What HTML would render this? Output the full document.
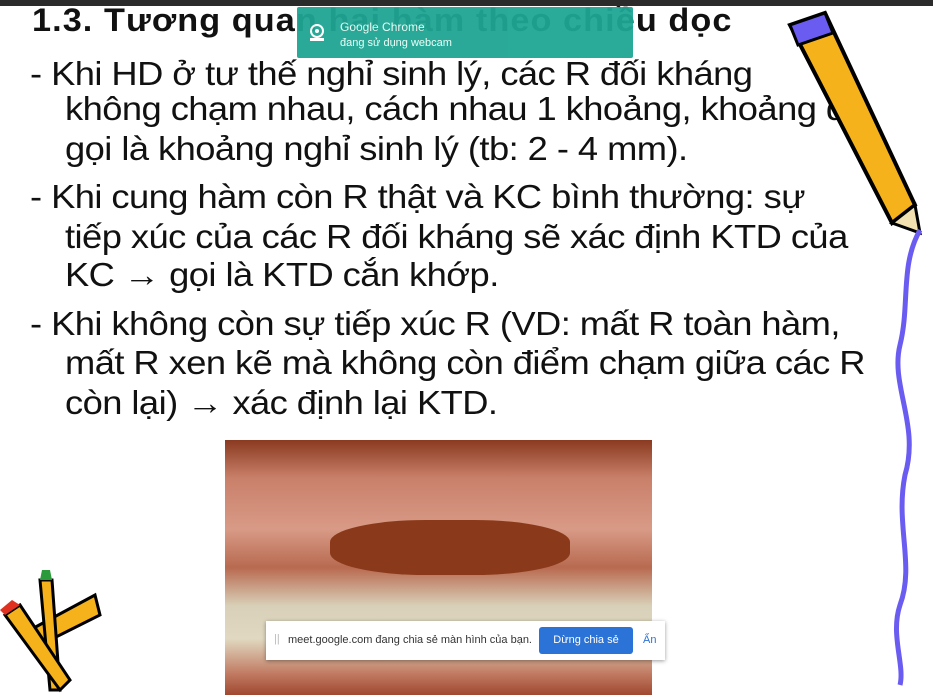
<!DOCTYPE html>
<html><head><meta charset="utf-8"><style>
body{margin:0;width:933px;height:695px;background:#fff;position:relative;overflow:hidden;font-family:"Liberation Sans","DejaVu Sans",sans-serif}
.topbar{position:absolute;left:0;top:0;width:933px;height:6px;background:#2b2b2b}
.l{position:absolute;white-space:nowrap;font-size:33px;color:#111;letter-spacing:-0.5px;transform-origin:left center;transform:scaleX(1.1)}
.pop{position:absolute;left:297px;top:7px;width:336px;height:51px;background:#1fa593;opacity:.95;color:#e8fff9;font-size:12px;border-radius:2px}
.bar{position:absolute;left:266px;top:621px;width:399px;height:39px;background:#fff;box-shadow:0 1px 4px rgba(0,0,0,.4);font-size:11px;color:#333}
</style></head><body>
<div class="topbar"></div>
<div class="l" style="left:32px;top:2px;font-size:32px;font-weight:bold;letter-spacing:1px;transform:scaleX(1.07)">1.3. Tương quan hai hàm theo chiều dọc</div>
<div class="l" style="left:30px;top:55px">- Khi HD ở tư thế nghỉ sinh lý, các R đối kháng</div>
<div class="l" style="left:65px;top:90px;transform:scaleX(1.1)">không chạm nhau, cách nhau 1 khoảng, khoảng đó</div>
<div class="l" style="left:65px;top:130px">gọi là khoảng nghỉ sinh lý (tb: 2 - 4 mm).</div>
<div class="l" style="left:30px;top:178px">- Khi cung hàm còn R thật và KC bình thường: sự</div>
<div class="l" style="left:65px;top:218px">tiếp xúc của các R đối kháng sẽ xác định KTD của</div>
<div class="l" style="left:65px;top:256px">KC → gọi là KTD cắn khớp.</div>
<div class="l" style="left:30px;top:305px">- Khi không còn sự tiếp xúc R (VD: mất R toàn hàm,</div>
<div class="l" style="left:65px;top:344px">mất R xen kẽ mà không còn điểm chạm giữa các R</div>
<div class="l" style="left:65px;top:384px">còn lại) → xác định lại KTD.</div>
<svg style="position:absolute;left:780px;top:5px" width="153" height="690">
<polygon points="10,20 45,8 135,200 112,218" fill="#f5b21b" stroke="#000" stroke-width="4"/>
<polygon points="10,20 45,8 53,28 18,40" fill="#6a5cf0" stroke="#000" stroke-width="3"/>
<polygon points="112,218 135,200 140,228" fill="#f2e0b0" stroke="#000" stroke-width="3"/>
<path d="M140,225 C120,260 130,300 120,340 C110,380 140,420 125,470 C115,520 135,560 120,600 C110,630 125,660 120,680" stroke="#6a5cf0" stroke-width="5" fill="none"/>
</svg>
<svg style="position:absolute;left:0;top:570px" width="110" height="125">
<polygon points="30,60 95,25 100,45 40,75" fill="#f5b21b" stroke="#000" stroke-width="3"/>
<polygon points="40,10 52,10 60,120 50,120" fill="#f5b21b" stroke="#000" stroke-width="3"/>
<polygon points="40,10 52,10 50,0 42,0" fill="#2a9a3a"/>
<polygon points="5,45 20,35 70,110 60,120" fill="#f5b21b" stroke="#000" stroke-width="3"/>
<polygon points="5,45 20,35 12,30 0,40" fill="#e03020"/>
</svg>
<div style="position:absolute;left:225px;top:440px;width:427px;height:255px;background:linear-gradient(180deg,#8a3a20 0%,#c9806a 15%,#d89a86 35%,#b86a50 50%,#d8d0b8 65%,#e0d8c0 78%,#c07860 92%,#a04830 100%)"></div>
<div style="position:absolute;left:330px;top:520px;width:240px;height:55px;background:#8a3a1a;border-radius:40%"></div>
<div class="pop"><svg style="position:absolute;left:10px;top:16px" width="20" height="20"><circle cx="10" cy="8" r="6" fill="none" stroke="#fff" stroke-width="2"/><circle cx="10" cy="8" r="2" fill="#fff"/><rect x="3" y="15" width="14" height="3" fill="#fff"/></svg><div style="position:absolute;left:43px;top:13px">Google Chrome</div><div style="position:absolute;left:43px;top:30px;font-size:11px">đang sử dụng webcam</div></div>
<div class="bar"><span style="position:absolute;left:8px;top:12px;color:#bbb">||</span><span style="position:absolute;left:22px;top:13px">meet.google.com đang chia sẻ màn hình của bạn.</span><div style="position:absolute;left:273px;top:6px;width:94px;height:27px;background:#2b73d6;color:#fff;border-radius:3px;text-align:center;line-height:27px">Dừng chia sẻ</div><span style="position:absolute;left:377px;top:13px;color:#2b73d6">Ẩn</span></div>
</body></html>
